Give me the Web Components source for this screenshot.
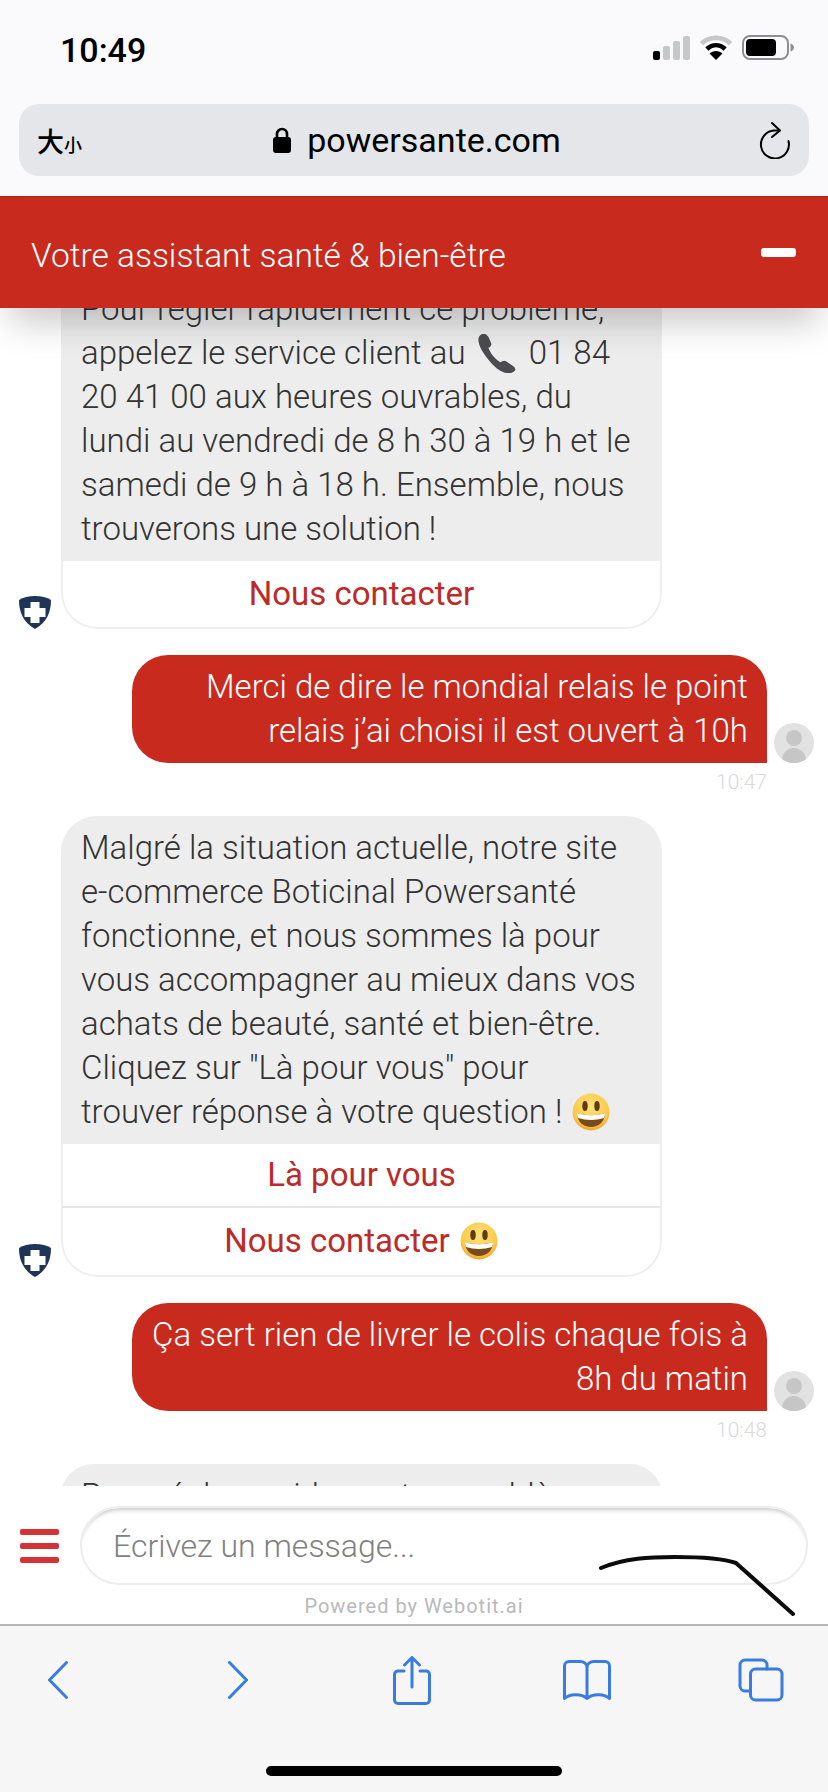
<!DOCTYPE html>
<html lang="fr">
<head>
<meta charset="utf-8">
<title>powersante.com</title>
<style>
  html, body { margin: 0; padding: 0; height: 1792px; overflow: hidden; background: #fff; }
  body { font-family: Roboto, "Noto Sans", sans-serif; position: relative; display: flex; flex-direction: column; }
  .nowrap { white-space: nowrap; }
</style>
</head>
<body>
<ios-top-bar url="powersante.com" time="10:49"></ios-top-bar>
<chat-header>Votre assistant santé &amp; bien-être</chat-header>
<chat-log>
  <bot-message>
    Pour régler rapidement ce problème, appelez le service client au <chat-emoji kind="phone"></chat-emoji> 01 84 20 41 00 aux heures ouvrables, du lundi au vendredi de 8 h 30 à 19 h et le samedi de 9 h à 18 h. Ensemble, nous trouverons une solution !
    <chat-action slot="actions">Nous contacter</chat-action>
  </bot-message>
  <user-message time="10:47">Merci de dire le mondial relais le point relais j’ai choisi il est ouvert à 10h</user-message>
  <bot-message>
    Malgré la situation actuelle, notre site <span class="nowrap">e-commerce</span> Boticinal Powersanté fonctionne, et nous sommes là pour vous accompagner au mieux dans vos achats de beauté, santé et bien-être. Cliquez sur "Là pour vous" pour trouver réponse à votre question ! <chat-emoji kind="smile"></chat-emoji>
    <chat-action slot="actions">Là pour vous</chat-action>
    <chat-action slot="actions" tall>Nous contacter <chat-emoji kind="smile"></chat-emoji></chat-action>
  </bot-message>
  <user-message time="10:48">Ça sert rien de livrer le colis chaque fois à 8h du matin</user-message>
  <bot-message>Pour régler rapidement ce problème,</bot-message>
</chat-log>
<chat-composer placeholder="Écrivez un message..." credit="Powered by Webotit.ai"></chat-composer>
<ios-toolbar></ios-toolbar>
<ink-stroke></ink-stroke>

<script>
class IosTopBar extends HTMLElement {
  connectedCallback() {
    const root = this.attachShadow({ mode: 'open' });
    root.innerHTML = `
      <style>
        :host { display: block; height: 196px; box-sizing: border-box; background: #fafafc; color: #000; }
        .status { height: 104px; box-sizing: border-box; padding: 28px 34px 0 60px; display: flex; justify-content: space-between; align-items: flex-start; }
        .time { font: 500 34px/44px Roboto, sans-serif; }
        .icons { display: flex; align-items: center; gap: 10px; margin-top: 7px; }
        .url { margin: 0 19px 0 19px; height: 72px; border-radius: 20px; background: #e4e6e9; display: grid; grid-template-columns: 1fr auto 1fr; align-items: center; padding: 0 18px 0 18px; }
        .size { font: 500 27px/1 "Noto Sans CJK SC", sans-serif; display: flex; align-items: flex-end; }
        .size small { font-size: 18px; margin-bottom: 1px; }
        .site { display: flex; align-items: center; gap: 16px; margin-left: 6px; font: 400 34px/1 Roboto, sans-serif; }
        .reload { justify-self: end; display: block; }
      </style>
      <div class="status">
        <span class="time">${this.getAttribute('time')}</span>
        <span class="icons">
          <svg width="37" height="24" viewBox="0 0 37 24">
            <rect x="0" y="15" width="7" height="9" rx="2" fill="#000"/>
            <rect x="10" y="10" width="7" height="14" rx="2" fill="#c6c7c9"/>
            <rect x="20" y="5" width="7" height="19" rx="2" fill="#c6c7c9"/>
            <rect x="30" y="0" width="7" height="24" rx="2" fill="#c6c7c9"/>
          </svg>
          <svg width="32" height="25" viewBox="0 0 32 25">
            <path d="M1.5 8.5C9.5 1 22.5 1 30.5 8.5" fill="none" stroke="#c6c7c9" stroke-width="4.6"/>
            <path d="M6.8 14C12.5 9 19.5 9 25.2 14" fill="none" stroke="#000" stroke-width="4.6"/>
            <path d="M9.5 18.5C13 15 19 15 22.5 18.5L16 25Z" fill="#000"/>
          </svg>
          <svg width="52" height="25" viewBox="0 0 52 25">
            <rect x="1" y="1" width="45" height="23" rx="7" fill="none" stroke="#8e8e90" stroke-width="2"/>
            <rect x="4" y="4" width="30" height="17" rx="4" fill="#000"/>
            <path d="M48.5 8.5C51 9.5 52 11 52 12.5S51 15.5 48.5 16.500Z" fill="#8e8e90"/>
          </svg>
        </span>
      </div>
      <div class="url">
        <span class="size" lang="zh">大<small>小</small></span>
        <span class="site">
          <svg width="18" height="26" viewBox="0 0 18 26"><path d="M4 11V7a5 5 0 0 1 10 0v4" fill="none" stroke="#000" stroke-width="2.6"/><rect x="0" y="10" width="18" height="16" rx="3" fill="#000"/></svg>
          <span>${this.getAttribute('url')}</span>
        </span>
        <svg class="reload" width="32" height="38" viewBox="0 0 32 38" fill="none" stroke="#000" stroke-width="2" stroke-linecap="round" stroke-linejoin="round">
          <path d="M20 9.500H15A14 14 0 1 0 29.500 20"/>
          <path d="M13 2L21 9.500L13 16"/>
        </svg>
      </div>`;
  }
}

class ChatHeader extends HTMLElement {
  connectedCallback() {
    const root = this.attachShadow({ mode: 'open' });
    root.innerHTML = `
      <style>
        :host { display: flex; align-items: center; justify-content: space-between; position: relative; z-index: 2; height: 112px; box-sizing: border-box; padding: 7px 32px 0 31px; background: #c92a1e; border-top: 1px solid #a8261c; color: #fff; font: 300 33.500px/1 Roboto, sans-serif; box-shadow: 0 24px 36px -10px rgba(0,0,0,.22); }
        i { display: block; width: 35px; height: 9px; border-radius: 3px; background: #fff; margin-top: -7px; }
      </style>
      <slot></slot><i></i>`;
  }
}

class ChatLog extends HTMLElement {
  connectedCallback() {
    const root = this.attachShadow({ mode: 'open' });
    root.innerHTML = `
      <style>
        :host { display: block; height: 1178px; overflow: hidden; background: #fff; }
        .rail { display: flex; flex-direction: column; margin-top: -31px; }
      </style>
      <div class="rail"><slot></slot></div>`;
  }
}

class BotMessage extends HTMLElement {
  connectedCallback() {
    const root = this.attachShadow({ mode: 'open' });
    root.innerHTML = `
      <style>
        :host { display: flex; align-items: flex-end; gap: 10px; padding: 0 0 0 19px; margin-bottom: 26px; }
        .shield { flex: none; display: block; width: 32px; height: 33px; }
        .card { width: 601px; box-sizing: border-box; border-radius: 36px; overflow: hidden; }
        .text { background: #ededed; color: #333; padding: 10px 24px 10px 20px; font: 300 33px/44px Roboto, sans-serif; }
        .actions { display: block; border: 2px solid #eee; border-top: 0; border-radius: 0 0 36px 36px; background: #fff; }
        .actions.empty { display: none; }
      </style>
      <svg class="shield" viewBox="0 0 32 33">
        <path d="M16 0C22 0 28 1.500 32 4C32 16 28 26 16 33C4 26 0 16 0 4C4 1.500 10 0 16 0Z" fill="#1e3557"/>
        <path d="M11.500 6h9v6h6v9h-6v6h-9v-6h-6v-9h6z" fill="#fff"/>
      </svg>
      <div class="card">
        <div class="text"><slot></slot></div>
        <div class="actions"><slot name="actions"></slot></div>
      </div>`;
    const hasActions = this.querySelector('[slot="actions"]');
    if (!hasActions) root.querySelector('.actions').classList.add('empty');
  }
}

class ChatAction extends HTMLElement {
  connectedCallback() {
    const root = this.attachShadow({ mode: 'open' });
    root.innerHTML = `
      <style>
        :host { display: flex; align-items: center; justify-content: center; gap: 9px; height: 66px; box-sizing: border-box; padding-bottom: 2px; color: #bd2a27; font: 400 33px/1 Roboto, sans-serif; }
        :host(:not(:last-child)) { border-bottom: 2px solid #e6e6e6; height: 64px; }
        :host([tall]) { height: 67px; }
      </style>
      <slot></slot>`;
  }
}

class UserMessage extends HTMLElement {
  connectedCallback() {
    const root = this.attachShadow({ mode: 'open' });
    root.innerHTML = `
      <style>
        :host { display: block; margin-bottom: 24px; padding: 0 14px 0 132px; }
        .row { display: flex; align-items: flex-end; gap: 7px; }
        .bubble { width: 635px; box-sizing: border-box; background: #c92a1e; color: #fff; text-align: right; padding: 10px 19px 10px 16px; border-radius: 36px 36px 0 36px; font: 300 33px/44px Roboto, sans-serif; }
        .avatar { display: block; flex: none; width: 40px; height: 40px; }
        time { display: block; width: 635px; text-align: right; margin-top: 9px; color: #d9d9d9; font: 300 21px/20px Roboto, sans-serif; }
      </style>
      <div class="row">
        <div class="bubble"><slot></slot></div>
        <svg class="avatar" viewBox="0 0 40 40">
          <clipPath id="c"><circle cx="20" cy="20" r="20"/></clipPath>
          <circle cx="20" cy="20" r="20" fill="#e2e2e2"/>
          <g clip-path="url(#c)" fill="#c6c6c6"><circle cx="20" cy="15" r="8"/><ellipse cx="20" cy="37" rx="12" ry="12"/></g>
        </svg>
      </div>
      <time>${this.getAttribute('time')}</time>`;
  }
}

class ChatEmoji extends HTMLElement {
  connectedCallback() {
    const root = this.attachShadow({ mode: 'open' });
    const phone = `<svg width="41" height="39" viewBox="0 0 38 38" preserveAspectRatio="none"><path d="M5 1C8 -1 11 0 12.500 3L15 9C15.500 11 14.500 12.500 12.500 13.500C13.500 18 19 25 23.500 27.500C25.500 26 27.500 25.500 29.500 27L35.500 31.500C38 33.500 38 35.500 35.500 37C30 40 22 37 14 27C6 17 0 6 5 1Z" fill="#4c4c4e"/></svg>`;
    const smile = `<svg width="38" height="38" viewBox="0 0 38 38">
      <defs><radialGradient id="f" cx=".5" cy=".35" r=".7"><stop offset="0" stop-color="#ffe27a"/><stop offset=".7" stop-color="#fbc94a"/><stop offset="1" stop-color="#ef9a2e"/></radialGradient></defs>
      <circle cx="19" cy="19" r="18.500" fill="url(#f)"/>
      <ellipse cx="13" cy="13" rx="2.700" ry="5" fill="#5e3b12"/><ellipse cx="25" cy="13" rx="2.700" ry="5" fill="#5e3b12"/>
      <path d="M5 20C13 23 25 23 33 20C33 29 26 34 19 34C12 34 5 29 5 20Z" fill="#7a4a1a"/>
      <path d="M5 20C13 23 25 23 33 20C33 22 32.500 24 32 25C24 27.500 14 27.500 6 25C5.500 24 5 22 5 20Z" fill="#fff"/>
    </svg>`;
    root.innerHTML = `
      <style>
        :host { display: inline-block; width: 38px; height: 38px; vertical-align: -8px; margin: 0 1px; }
        :host([kind="phone"]) { width: 41px; margin: 0 5px 0 1px; }
        svg { display: block; }
      </style>${this.getAttribute('kind') === 'phone' ? phone : smile}`;
  }
}

class ChatComposer extends HTMLElement {
  connectedCallback() {
    const root = this.attachShadow({ mode: 'open' });
    root.innerHTML = `
      <style>
        :host { display: block; position: relative; z-index: 1; height: 140px; box-sizing: border-box; padding: 20px 20px 0 20px; background: #fff; border-bottom: 2px solid #b7b7b7; }
        .row { display: flex; align-items: center; gap: 21px; }
        .menu { flex: none; width: 39px; display: flex; flex-direction: column; gap: 8px; }
        .menu i { display: block; height: 6px; border-radius: 2px; background: #d33236; }
        .field { flex: 1; height: 79px; box-sizing: border-box; border: 2px solid #ededed; border-radius: 40px; padding: 0 31px; display: flex; align-items: center; color: #808080; font: 300 32px/1 Roboto, sans-serif; box-shadow: inset 0 5px 4px -3px rgba(0,0,0,.22); }
        .credit { text-align: center; margin-top: 10px; color: #b9b9b9; font: 400 20px/22px Roboto, sans-serif; letter-spacing: 1px; }
      </style>
      <div class="row">
        <div class="menu"><i></i><i></i><i></i></div>
        <div class="field">${this.getAttribute('placeholder')}</div>
      </div>
      <div class="credit">${this.getAttribute('credit')}</div>`;
  }
}

class IosToolbar extends HTMLElement {
  connectedCallback() {
    const root = this.attachShadow({ mode: 'open' });
    root.innerHTML = `
      <style>
        :host { display: flex; flex-direction: column; align-items: center; height: 166px; box-sizing: border-box; background: #f6f6f7; }
        .tools { width: 100%; box-sizing: border-box; display: flex; align-items: center; justify-content: space-between; height: 108px; padding: 0 43px 0 34px; margin-bottom: 32px; }
        .cell { width: 48px; display: flex; justify-content: center; }
        .cell.fwd { margin-left: 6px; }
        .cell.share { margin-right: 2px; }
        svg { display: block; flex: none; fill: none; stroke: #3a7be0; stroke-width: 3; stroke-linecap: round; stroke-linejoin: round; }
        .home { width: 296px; height: 10px; border-radius: 5px; background: #000; }
      </style>
      <div class="tools">
        <div class="cell"><svg width="20" height="38" viewBox="0 0 20 38"><path d="M18.500 1.500L1.500 19L18.500 36.500"/></svg></div>
        <div class="cell fwd"><svg width="20" height="38" viewBox="0 0 20 38"><path d="M1.500 1.500L18.500 19L1.500 36.500"/></svg></div>
        <div class="cell share"><svg width="38" height="49" viewBox="0 0 38 49"><path d="M11 15H5a3.500 3.500 0 0 0-3.500 3.500V44A3.500 3.500 0 0 0 5 47.500H33a3.500 3.500 0 0 0 3.500-3.500V18.500A3.500 3.500 0 0 0 33 15H27"/><path d="M19 2V31M11.500 9L19 1.500L26.500 9"/></svg></div>
        <div class="cell"><svg width="48" height="40" viewBox="0 0 48 40"><path d="M24 7C24 4 21 1.500 17 1.500H6C3.500 1.500 1.500 3.500 1.500 6V38.500C6 34 18 33 24 38.500C30 33 42 34 46.500 38.500V6C46.500 3.500 44.500 1.500 42 1.500H31C27 1.500 24 4 24 7ZM24 7V37"/></svg></div>
        <div class="cell"><svg width="46" height="44" viewBox="0 0 46 44"><path d="M12 33H7a5 5 0 0 1-5-5V7a5 5 0 0 1 5-5h17a5 5 0 0 1 5 5v4"/><rect x="12.500" y="11" width="31.500" height="31" rx="5"/></svg></div>
      </div>
      <div class="home"></div>`;
  }
}

// pen mark drawn over the screenshot, not part of the ui
class InkStroke extends HTMLElement {
  connectedCallback() {
    const root = this.attachShadow({ mode: 'open' });
    root.innerHTML = `
      <style>
        :host { position: absolute; left: 590px; top: 1545px; width: 220px; height: 80px; z-index: 5; }
        svg { display: block; }
      </style>
      <svg width="220" height="80" viewBox="590 1545 220 80" fill="none" stroke="#0b0b0b" stroke-width="4" stroke-linecap="round" stroke-linejoin="round">
        <path d="M601 1568C625 1558 650 1557 675 1557C700 1557 722 1558 736 1563L793 1614" />
      </svg>`;
  }
}

customElements.define('ios-top-bar', IosTopBar);
customElements.define('chat-header', ChatHeader);
customElements.define('chat-log', ChatLog);
customElements.define('bot-message', BotMessage);
customElements.define('chat-action', ChatAction);
customElements.define('user-message', UserMessage);
customElements.define('chat-emoji', ChatEmoji);
customElements.define('chat-composer', ChatComposer);
customElements.define('ios-toolbar', IosToolbar);
customElements.define('ink-stroke', InkStroke);
</script>
</body>
</html>
